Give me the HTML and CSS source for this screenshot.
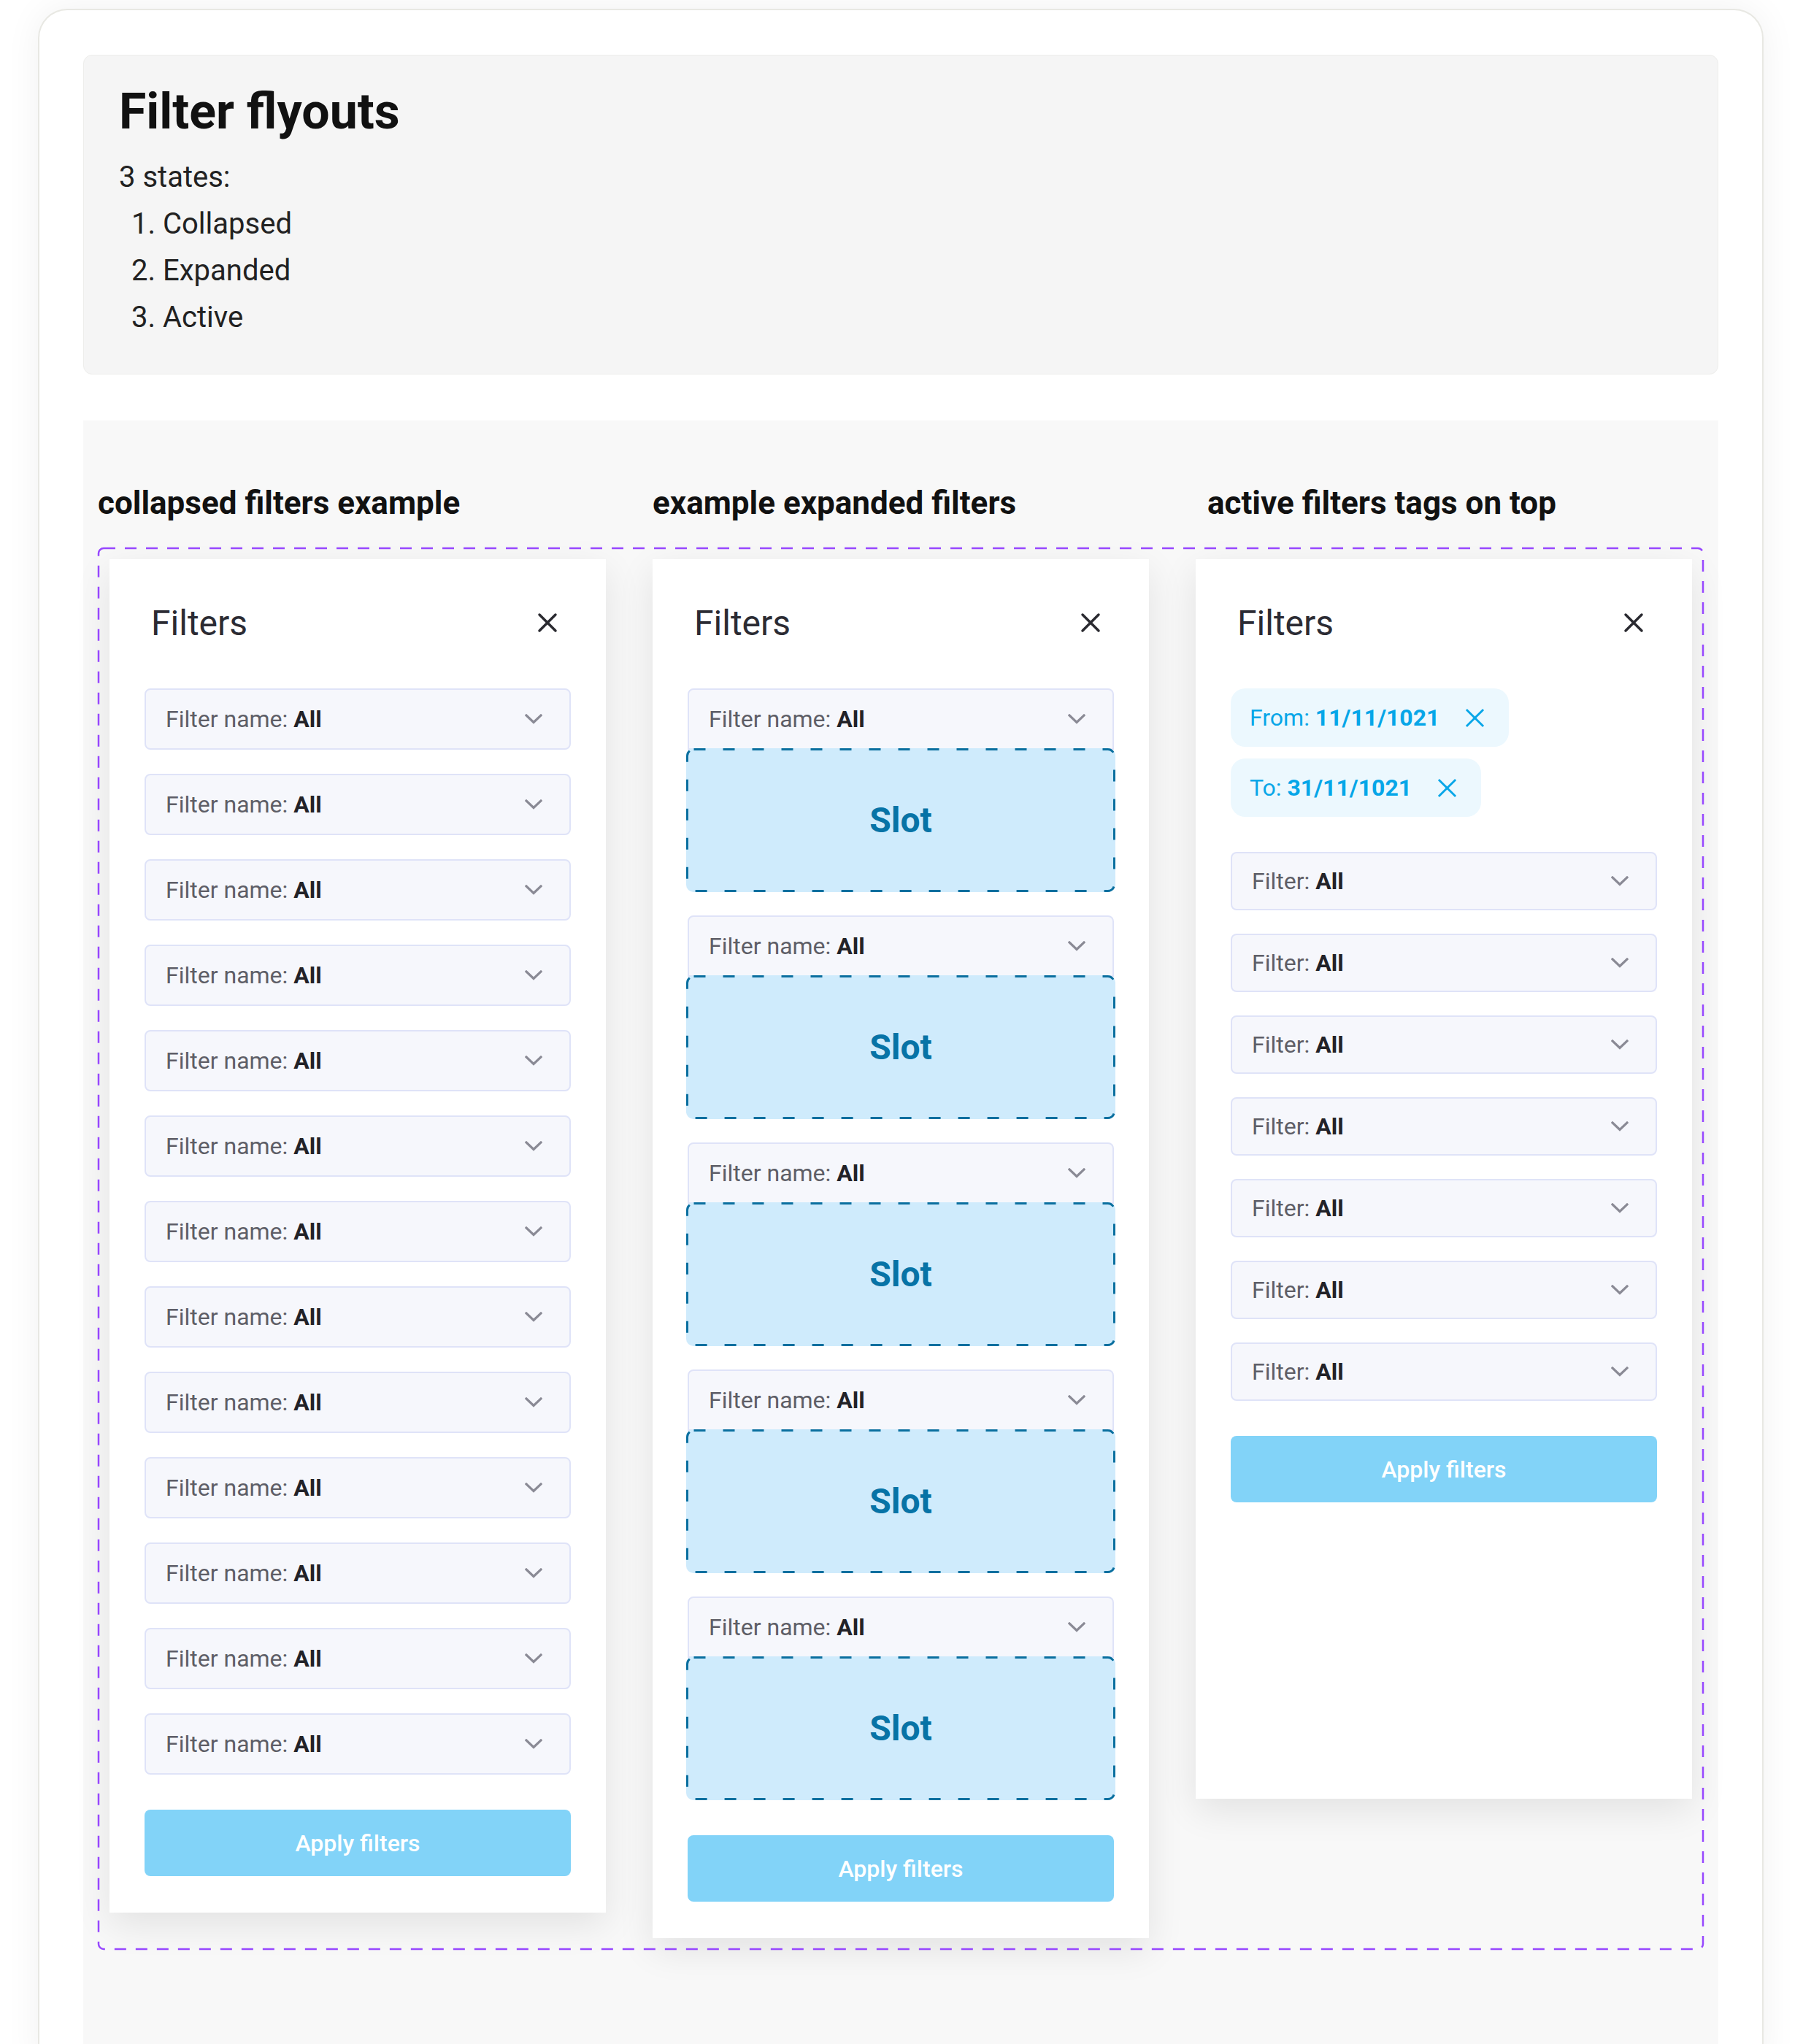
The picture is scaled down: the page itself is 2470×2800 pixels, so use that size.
FILE: index.html
```html
<!DOCTYPE html>
<html lang="en">
<head>
    <meta charset="UTF-8">
    <meta name="viewport" content="width=device-width, initial-scale=1.0">
    <title>Filter flyouts</title>
    <link rel="stylesheet" href="styles.css">
</head>
<body>
    <div class="page">
        <header class="intro">
            <h1>Filter flyouts</h1>
            <p>3 states:</p>
            <ol>
                <li>Collapsed</li>
                <li>Expanded</li>
                <li>Active</li>
            </ol>
        </header>

        <section class="examples">
            <div class="example-titles">
                <h2>collapsed filters example</h2>
                <h2>example expanded filters</h2>
                <h2>active filters tags on top</h2>
            </div>

            <div class="variant-set">
                <svg class="dash-frame" aria-hidden="true"><rect></rect></svg>

                <!-- collapsed -->
                <aside class="flyout">
                    <div class="flyout-head">
                        <span class="flyout-title">Filters</span>
                        <svg class="close" viewBox="0 0 28 28"><path d="M3 3l22 22M25 3L3 25"/></svg>
                    </div>
                    <div class="filter-list">
                        <div class="dropdown"><span>Filter name: <b>All</b></span><svg class="chev" viewBox="0 0 24 14"><path d="M2 2l10 9.5 10-9.5"/></svg></div>
                        <div class="dropdown"><span>Filter name: <b>All</b></span><svg class="chev" viewBox="0 0 24 14"><path d="M2 2l10 9.5 10-9.5"/></svg></div>
                        <div class="dropdown"><span>Filter name: <b>All</b></span><svg class="chev" viewBox="0 0 24 14"><path d="M2 2l10 9.5 10-9.5"/></svg></div>
                        <div class="dropdown"><span>Filter name: <b>All</b></span><svg class="chev" viewBox="0 0 24 14"><path d="M2 2l10 9.5 10-9.5"/></svg></div>
                        <div class="dropdown"><span>Filter name: <b>All</b></span><svg class="chev" viewBox="0 0 24 14"><path d="M2 2l10 9.5 10-9.5"/></svg></div>
                        <div class="dropdown"><span>Filter name: <b>All</b></span><svg class="chev" viewBox="0 0 24 14"><path d="M2 2l10 9.5 10-9.5"/></svg></div>
                        <div class="dropdown"><span>Filter name: <b>All</b></span><svg class="chev" viewBox="0 0 24 14"><path d="M2 2l10 9.5 10-9.5"/></svg></div>
                        <div class="dropdown"><span>Filter name: <b>All</b></span><svg class="chev" viewBox="0 0 24 14"><path d="M2 2l10 9.5 10-9.5"/></svg></div>
                        <div class="dropdown"><span>Filter name: <b>All</b></span><svg class="chev" viewBox="0 0 24 14"><path d="M2 2l10 9.5 10-9.5"/></svg></div>
                        <div class="dropdown"><span>Filter name: <b>All</b></span><svg class="chev" viewBox="0 0 24 14"><path d="M2 2l10 9.5 10-9.5"/></svg></div>
                        <div class="dropdown"><span>Filter name: <b>All</b></span><svg class="chev" viewBox="0 0 24 14"><path d="M2 2l10 9.5 10-9.5"/></svg></div>
                        <div class="dropdown"><span>Filter name: <b>All</b></span><svg class="chev" viewBox="0 0 24 14"><path d="M2 2l10 9.5 10-9.5"/></svg></div>
                        <div class="dropdown"><span>Filter name: <b>All</b></span><svg class="chev" viewBox="0 0 24 14"><path d="M2 2l10 9.5 10-9.5"/></svg></div>
                    </div>
                    <button class="apply">Apply filters</button>
                </aside>

                <!-- expanded -->
                <aside class="flyout">
                    <div class="flyout-head">
                        <span class="flyout-title">Filters</span>
                        <svg class="close" viewBox="0 0 28 28"><path d="M3 3l22 22M25 3L3 25"/></svg>
                    </div>
                    <div class="filter-list expanded">
                        <div class="filter-group">
                            <div class="dropdown open"><span>Filter name: <b>All</b></span><svg class="chev" viewBox="0 0 24 14"><path d="M2 2l10 9.5 10-9.5"/></svg></div>
                            <div class="slot"><svg class="slot-frame" aria-hidden="true"><rect></rect></svg>Slot</div>
                        </div>
                        <div class="filter-group">
                            <div class="dropdown open"><span>Filter name: <b>All</b></span><svg class="chev" viewBox="0 0 24 14"><path d="M2 2l10 9.5 10-9.5"/></svg></div>
                            <div class="slot"><svg class="slot-frame" aria-hidden="true"><rect></rect></svg>Slot</div>
                        </div>
                        <div class="filter-group">
                            <div class="dropdown open"><span>Filter name: <b>All</b></span><svg class="chev" viewBox="0 0 24 14"><path d="M2 2l10 9.5 10-9.5"/></svg></div>
                            <div class="slot"><svg class="slot-frame" aria-hidden="true"><rect></rect></svg>Slot</div>
                        </div>
                        <div class="filter-group">
                            <div class="dropdown open"><span>Filter name: <b>All</b></span><svg class="chev" viewBox="0 0 24 14"><path d="M2 2l10 9.5 10-9.5"/></svg></div>
                            <div class="slot"><svg class="slot-frame" aria-hidden="true"><rect></rect></svg>Slot</div>
                        </div>
                        <div class="filter-group">
                            <div class="dropdown open"><span>Filter name: <b>All</b></span><svg class="chev" viewBox="0 0 24 14"><path d="M2 2l10 9.5 10-9.5"/></svg></div>
                            <div class="slot"><svg class="slot-frame" aria-hidden="true"><rect></rect></svg>Slot</div>
                        </div>
                    </div>
                    <button class="apply">Apply filters</button>
                </aside>

                <!-- active -->
                <aside class="flyout flyout-active">
                    <div class="flyout-head">
                        <span class="flyout-title">Filters</span>
                        <svg class="close" viewBox="0 0 28 28"><path d="M3 3l22 22M25 3L3 25"/></svg>
                    </div>
                    <div class="tags">
                        <span class="tag"><span>From: <b>11/11/1021</b></span><svg class="tag-x" viewBox="0 0 28 28"><path d="M2 2l24 24M26 2L2 26"/></svg></span>
                        <span class="tag"><span>To: <b>31/11/1021</b></span><svg class="tag-x" viewBox="0 0 28 28"><path d="M2 2l24 24M26 2L2 26"/></svg></span>
                    </div>
                    <div class="filter-list compact">
                        <div class="dropdown"><span>Filter: <b>All</b></span><svg class="chev" viewBox="0 0 24 14"><path d="M2 2l10 9.5 10-9.5"/></svg></div>
                        <div class="dropdown"><span>Filter: <b>All</b></span><svg class="chev" viewBox="0 0 24 14"><path d="M2 2l10 9.5 10-9.5"/></svg></div>
                        <div class="dropdown"><span>Filter: <b>All</b></span><svg class="chev" viewBox="0 0 24 14"><path d="M2 2l10 9.5 10-9.5"/></svg></div>
                        <div class="dropdown"><span>Filter: <b>All</b></span><svg class="chev" viewBox="0 0 24 14"><path d="M2 2l10 9.5 10-9.5"/></svg></div>
                        <div class="dropdown"><span>Filter: <b>All</b></span><svg class="chev" viewBox="0 0 24 14"><path d="M2 2l10 9.5 10-9.5"/></svg></div>
                        <div class="dropdown"><span>Filter: <b>All</b></span><svg class="chev" viewBox="0 0 24 14"><path d="M2 2l10 9.5 10-9.5"/></svg></div>
                        <div class="dropdown"><span>Filter: <b>All</b></span><svg class="chev" viewBox="0 0 24 14"><path d="M2 2l10 9.5 10-9.5"/></svg></div>
                    </div>
                    <button class="apply">Apply filters</button>
                </aside>
            </div>
        </section>
    </div>
</body>
</html>
```

FILE: styles.css
```css
body {
    margin: 0;
    background-color: #fff;
    font-family: Roboto, "Liberation Sans", sans-serif;
    color: #1b1b1f;
}
.page {
    margin: 12px 54px 0 52px;
    padding: 61px 60px 0;
    border: 2px solid #e8e8e3;
    border-bottom: none;
    border-radius: 40px 40px 0 0;
    background-color: #fff;
    box-shadow: 0 0 50px rgba(0,0,0,0.06);
}
.intro {
    background-color: #f5f5f5;
    border: 1px solid #ededeb;
    border-radius: 12px;
    padding: 37px 48px 45px;
}
.intro h1 {
    margin: 0;
    font-size: 68px;
    line-height: 1.2;
    font-weight: 700;
    color: #111;
}
.intro p {
    margin: 16px 0 0;
    font-size: 40px;
    line-height: 64px;
    color: #222;
}
.intro ol {
    margin: 0;
    padding-left: 60px;
    font-size: 40px;
    line-height: 64px;
    color: #222;
}
.examples {
    margin-top: 63px;
    background-color: #f8f8f8;
    padding: 87px 20px 160px;
}
.example-titles {
    display: grid;
    grid-template-columns: repeat(3, 760px);
    margin-bottom: 35px;
}
.example-titles h2 {
    margin: 0;
    font-size: 44px;
    line-height: 1.2;
    font-weight: 700;
    color: #111;
}
.variant-set {
    position: relative;
    display: flex;
    align-items: flex-start;
    gap: 64px;
    padding: 16px;
}
.dash-frame, .slot-frame {
    position: absolute;
    top: 0;
    left: 0;
    width: 100%;
    height: 100%;
    overflow: visible;
    pointer-events: none;
}
.dash-frame rect {
    x: 1px;
    y: 1px;
    width: calc(100% - 2px);
    height: calc(100% - 2px);
    rx: 7px;
    fill: none;
    stroke: #9747ff;
    stroke-width: 2.5;
    stroke-dasharray: 16 13;
}
.flyout {
    flex: 1;
    box-sizing: border-box;
    background-color: #fff;
    padding: 48px 48px 50px;
    box-shadow: 0 16px 48px rgba(0,0,0,0.09);
}
.flyout-active {
    min-height: 1698px;
}
.flyout-head {
    display: flex;
    align-items: center;
    justify-content: space-between;
    height: 78px;
    padding: 0 18px 0 9px;
    margin-bottom: 51px;
}
.flyout-title {
    font-size: 48px;
    color: #2b2b33;
}
.close {
    width: 28px;
    height: 28px;
    fill: none;
    stroke: #2a2a30;
    stroke-width: 3.5;
    stroke-linecap: round;
}
.filter-list {
    display: flex;
    flex-direction: column;
    gap: 33px;
}
.filter-list.expanded {
    gap: 32px;
}
.filter-list.compact {
    gap: 32px;
}
.dropdown {
    box-sizing: border-box;
    height: 84px;
    display: flex;
    align-items: center;
    justify-content: space-between;
    padding: 0 37px 0 27px;
    background-color: #f6f7fc;
    border: 2px solid #dfe3f8;
    border-radius: 8px;
    font-size: 32px;
    color: #5e5e67;
}
.dropdown b {
    color: #222228;
}
.compact .dropdown {
    height: 80px;
}
.dropdown.open {
    border-radius: 8px 8px 0 0;
}
.chev {
    width: 24px;
    height: 14px;
    fill: none;
    stroke: #8a8a95;
    stroke-width: 3.2;
    stroke-linecap: square;
    stroke-linejoin: miter;
}
.filter-group {
    display: flex;
    flex-direction: column;
}
.slot {
    position: relative;
    height: 197px;
    margin: -2px -2px 0;
    display: flex;
    align-items: center;
    justify-content: center;
    background-color: #cfebfc;
    border-radius: 10px;
    font-size: 48px;
    font-weight: 700;
    color: #0773a6;
}
.slot-frame rect {
    x: 1.5px;
    y: 1.5px;
    width: calc(100% - 3px);
    height: calc(100% - 3px);
    rx: 9px;
    fill: none;
    stroke: #0a6f9f;
    stroke-width: 3;
    stroke-dasharray: 16 24;
}
.apply {
    display: block;
    width: 100%;
    height: 91px;
    margin-top: 48px;
    border: none;
    border-radius: 8px;
    background-color: #82d3f8;
    color: #fff;
    font-family: Roboto, "Liberation Sans", sans-serif;
    font-size: 32px;
    font-weight: 500;
    cursor: pointer;
}
.tags {
    display: flex;
    flex-direction: column;
    align-items: flex-start;
    gap: 16px;
    margin-bottom: 48px;
}
.tag {
    box-sizing: border-box;
    height: 80px;
    display: inline-flex;
    align-items: center;
    gap: 35px;
    padding: 0 33px 0 26px;
    background-color: #ecf8fe;
    border-radius: 20px;
    font-size: 32px;
    color: #06a6e8;
}
.tag-x {
    width: 27px;
    height: 27px;
    fill: none;
    stroke: #06a6e8;
    stroke-width: 3;
}
```
